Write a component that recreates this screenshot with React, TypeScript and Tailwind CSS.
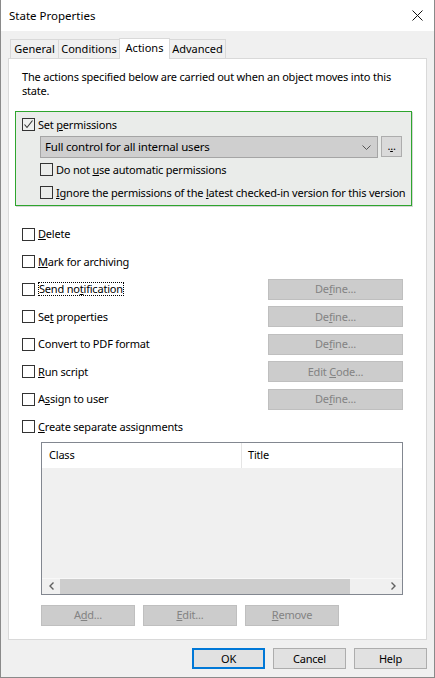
import React from "react";

function Check({ checked = false, tone = "bg-white" }: { checked?: boolean; tone?: string }) {
  return (
    <span className={`w-[13px] h-[13px] border border-[#333333] ${tone} flex items-center justify-center shrink-0`}>
      {checked && (
        <svg width="11" height="11" viewBox="0 0 11 11">
          <polyline points="1.5,5.5 4,8.5 9.5,1.5" fill="none" stroke="#333333" strokeWidth="1.1" />
        </svg>
      )}
    </span>
  );
}

function Btn({ children, w = "w-[135px]" }: { children: React.ReactNode; w?: string }) {
  return (
    <div className={`${w} h-[21px] bg-[#cccccc] border border-[#bfbfbf] text-[#838383] flex items-center justify-center`}>
      <span>{children}</span>
    </div>
  );
}

function DialogBtn({ children, focused = false }: { children: React.ReactNode; focused?: boolean }) {
  return (
    <div
      className={`w-[73px] h-[21px] bg-[#e1e1e1] flex items-center justify-center text-black ${
        focused ? "border-2 border-[#0078d7]" : "border border-[#adadad]"
      }`}
    >
      <span>{children}</span>
    </div>
  );
}

const ROWS: { label: React.ReactNode; button?: React.ReactNode; focus?: boolean }[] = [
  { label: <><u>D</u>elete</> },
  { label: <><u>M</u>ark for archiving</> },
  { label: <>Send no<u>t</u>ification</>, button: <>De<u>f</u>ine...</>, focus: true },
  { label: <>Se<u>t</u> properties</>, button: <>De<u>f</u>ine...</> },
  { label: <>Convert to PDF format</>, button: <>De<u>f</u>ine...</> },
  { label: <><u>R</u>un script</>, button: <>Edit <u>C</u>ode...</> },
  { label: <>A<u>s</u>sign to user</>, button: <>De<u>f</u>ine...</> },
  { label: <><u>C</u>reate separate assignments</> },
];

export default function App() {
  return (
    <div
      className="w-[435px] h-[678px] bg-[#f0f0f0] border-x border-b border-[#8a8a8a] flex flex-col text-[11px] text-black leading-[14px] tracking-[-0.2px] overflow-hidden whitespace-nowrap"
      style={{ fontFamily: "'Segoe UI', 'Noto Sans', 'Liberation Sans', sans-serif" }}
    >
      {/* Title bar */}
      <div className="h-[31px] bg-white flex items-center justify-between pl-[8px] pr-[11px] shrink-0">
        <span className="text-[11.5px] tracking-normal">State Properties</span>
        <svg width="11" height="11" viewBox="0 0 11 11">
          <path d="M0.5 0.5 L10.5 10.5 M10.5 0.5 L0.5 10.5" stroke="#111" strokeWidth="1" />
        </svg>
      </div>

      {/* Tabs */}
      <div className="h-[27px] flex items-end pl-[8px] shrink-0 relative z-10 tracking-normal">
        <div className="h-[19px] w-[49px] border border-b-0 border-[#d9d9d9] bg-[#f0f0f0] flex items-center justify-center ml-[1px]">General</div>
        <div className="h-[19px] w-[62px] -ml-[1px] border border-b-0 border-[#d9d9d9] bg-[#f0f0f0] flex items-center justify-center">Conditions</div>
        <div className="h-[21px] w-[51px] -ml-[1px] border border-b-0 border-[#d9d9d9] bg-white flex items-start pt-[2px] justify-center -mb-[1px] relative z-10">Actions</div>
        <div className="h-[19px] w-[57px] -ml-[1px] border border-b-0 border-[#d9d9d9] bg-[#f0f0f0] flex items-center justify-center">Advanced</div>
      </div>

      {/* Panel */}
      <div className="mx-[7px] h-[582px] border border-[#d9d9d9] bg-white flex flex-col shrink-0">
        <p className="mt-[11px] ml-[13px]">
          The actions specified below are carried out when an object moves into this
          <br />
          state.
        </p>

        {/* Permissions group: green frame */}
        <div className="mt-[13px] ml-[6px] w-[397px] h-[95px] bg-[#2ea52e] p-[1px] shadow-[1px_1px_0_#d6d6d6]">
          <div className="w-full h-full bg-[#eaecea] px-[6px] pt-[6px] flex flex-col">
            <div className="flex items-center gap-[3px] h-[13px]">
              <Check checked tone="bg-[#eef0ee]" />
              <span>
                Set <u>p</u>ermissions
              </span>
            </div>
            <div className="mt-[5px] ml-[18px] flex gap-[3px]">
              <div className="w-[338px] h-[22px] bg-[#cfcfcf] border border-[#a5a5a5] flex items-center justify-between pl-[4px] pr-[6px]">
                <span className="text-[11.5px]">Full control for all internal users</span>
                <svg width="9" height="5" viewBox="0 0 9 5">
                  <polyline points="0.5,0.5 4.5,4.5 8.5,0.5" fill="none" stroke="#555" strokeWidth="1" />
                </svg>
              </div>
              <div className="w-[21px] h-[21px] bg-[#dadada] border border-[#adadad] flex items-center justify-center text-black pb-[2px]">
                <span>
                  .<u>.</u>.
                </span>
              </div>
            </div>
            <div className="mt-[5px] ml-[18px] flex items-center gap-[3px] h-[13px]">
              <Check tone="bg-[#eaecea]" />
              <span>
                Do not <u>u</u>se automatic permissions
              </span>
            </div>
            <div className="mt-[10px] ml-[18px] flex items-center gap-[3px] h-[13px]">
              <Check tone="bg-[#eaecea]" />
              <span>
                <u>I</u>gnore the permissions of the <u>l</u>atest checked-in version for this version
              </span>
            </div>
          </div>
        </div>

        {/* Action rows */}
        <div className="mt-[14.5px] flex flex-col">
          {ROWS.map((r, i) => (
            <div key={i} className="h-[27.5px] flex items-center justify-between pl-[13px] pr-[23px]">
              <div className="flex items-center gap-[3px]">
                <Check />
                <span className={r.focus ? "outline outline-1 outline-dotted outline-black -outline-offset-1 px-[1px]" : ""}>
                  {r.label}
                </span>
              </div>
              {r.button && <Btn>{r.button}</Btn>}
            </div>
          ))}
        </div>

        {/* Assignment list */}
        <div className="mt-[1px] ml-[32px] w-[362px] h-[153px] border border-[#828790] bg-[#f0f0f0] flex flex-col">
          <div className="h-[25px] bg-white flex shrink-0">
            <div className="w-[200px] border-r border-[#e5e5e5] flex items-center pl-[7px]">Class</div>
            <div className="flex-1 flex items-center pl-[6px]">Title</div>
          </div>
          <div className="flex-1" />
          <div className="h-[16px] flex items-center border-t border-[#f8f8f8] shrink-0">
            <div className="w-[18px] flex justify-center">
              <svg width="5" height="8" viewBox="0 0 5 8">
                <polyline points="4.5,0.5 1,4 4.5,7.5" fill="none" stroke="#606060" strokeWidth="1.4" />
              </svg>
            </div>
            <div className="w-[290px] h-[15px] bg-[#cdcdcd]" />
            <div className="flex-1 flex justify-end pr-[6px]">
              <svg width="5" height="8" viewBox="0 0 5 8">
                <polyline points="0.5,0.5 4,4 0.5,7.5" fill="none" stroke="#606060" strokeWidth="1.4" />
              </svg>
            </div>
          </div>
        </div>

        <div className="mt-[10px] ml-[32px] flex gap-[8px]">
          <Btn w="w-[94px]">A<u>d</u>d...</Btn>
          <Btn w="w-[94px]"><u>E</u>dit...</Btn>
          <Btn w="w-[94px]"><u>R</u>emove</Btn>
        </div>
      </div>

      {/* Dialog buttons */}
      <div className="mt-[8px] flex justify-end gap-[8px] pr-[7px]">
        <DialogBtn focused>OK</DialogBtn>
        <DialogBtn>Cancel</DialogBtn>
        <DialogBtn>Help</DialogBtn>
      </div>
    </div>
  );
}
